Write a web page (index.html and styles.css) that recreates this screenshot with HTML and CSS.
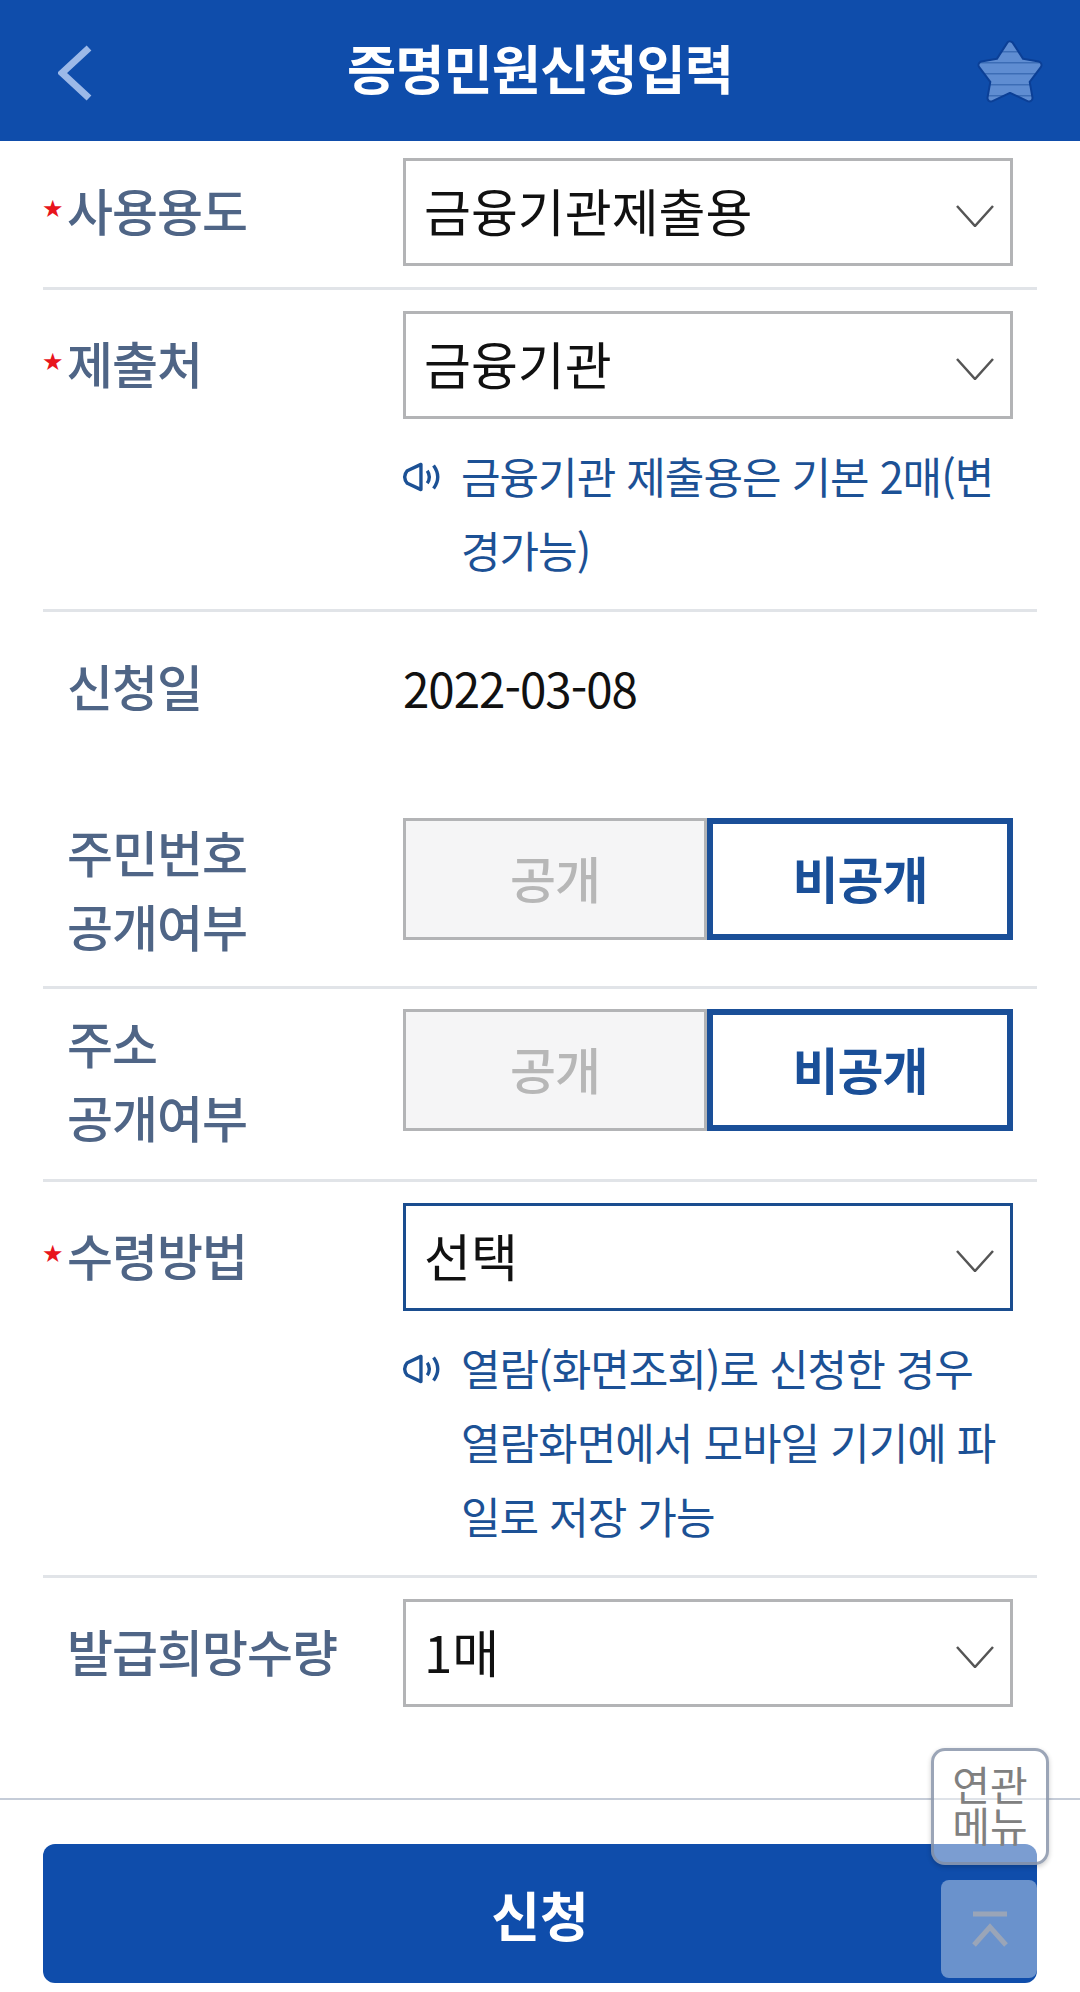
FILE: index.html
```html
<!DOCTYPE html>
<html lang="ko">
  <head>
    <meta charset="utf-8">
    <title>증명민원신청입력</title>
    <link rel="stylesheet" href="styles.css">
  </head>
  <body>
    <div class="page">
      <header class="top">
        <svg class="back" viewBox="0 0 34 56"><path d="M31 3 L4 28 L31 53" /></svg>
        <h1>증명민원신청입력</h1>
        <svg class="star" viewBox="0 0 66 64">
          <defs>
            <pattern id="stripes" width="66" height="11" patternUnits="userSpaceOnUse">
              <rect width="66" height="11" fill="#5f8dd2" />
              <rect width="66" height="1.5" fill="#3c6db6" />
            </pattern>
          </defs>
          <path d="M33 5 L44 22 L61 25 L49 41 L52 58 L33 49 L14 58 L17 41 L5 25 L22 22 Z" fill="#0b3f96" stroke="#0b3f96" stroke-width="9" stroke-linejoin="round" />
          <path d="M33 5 L44 22 L61 25 L49 41 L52 58 L33 49 L14 58 L17 41 L5 25 L22 22 Z" fill="url(#stripes)" stroke="url(#stripes)" stroke-width="5" stroke-linejoin="round" />
        </svg>
      </header>

      <form class="form">
        <div class="row row-a">
          <div class="label req">사용용도</div>
          <div class="field">
            <div class="sel">금융기관제출용
              <svg class="arrow" viewBox="0 0 38 22"><path d="M1 1 L19 21 L37 1" /></svg>
            </div>
          </div>
        </div>

        <div class="row row-b">
          <div class="label req">제출처</div>
          <div class="field">
            <div class="sel">금융기관
              <svg class="arrow" viewBox="0 0 38 22"><path d="M1 1 L19 21 L37 1" /></svg>
            </div>
            <div class="note">
              <svg class="spk" viewBox="0 0 40 28">
                <path d="M19 2 L19 26 L6 20 Q1 14 6 8 Z" />
                <path d="M25 8 Q29 14 25 20" />
                <path d="M31 3 Q39 14 31 25" />
              </svg>
              <p>금융기관 제출용은 기본 2매(변경가능)</p>
            </div>
          </div>
        </div>

        <div class="row row-date">
          <div class="label">신청일</div>
          <div class="field date">2022-03-08</div>
        </div>

        <div class="row row-c">
          <div class="label two">주민번호<br>공개여부</div>
          <div class="field">
            <div class="toggle">
              <div class="opt">공개</div>
              <div class="opt on">비공개</div>
            </div>
          </div>
        </div>

        <div class="row row-d">
          <div class="label two">주소<br>공개여부</div>
          <div class="field">
            <div class="toggle">
              <div class="opt">공개</div>
              <div class="opt on">비공개</div>
            </div>
          </div>
        </div>

        <div class="row row-b">
          <div class="label req">수령방법</div>
          <div class="field">
            <div class="sel active">선택
              <svg class="arrow" viewBox="0 0 38 22"><path d="M1 1 L19 21 L37 1" /></svg>
            </div>
            <div class="note">
              <svg class="spk" viewBox="0 0 40 28">
                <path d="M19 2 L19 26 L6 20 Q1 14 6 8 Z" />
                <path d="M25 8 Q29 14 25 20" />
                <path d="M31 3 Q39 14 31 25" />
              </svg>
              <p>열람(화면조회)로 신청한 경우 열람화면에서 모바일 기기에 파일로 저장 가능</p>
            </div>
          </div>
        </div>

        <div class="row row-last">
          <div class="label">발급희망수량</div>
          <div class="field">
            <div class="sel">1매
              <svg class="arrow" viewBox="0 0 38 22"><path d="M1 1 L19 21 L37 1" /></svg>
            </div>
          </div>
        </div>
      </form>

      <div class="bottom">
        <button class="apply" type="button">신청</button>
      </div>

      <div class="rel-menu">연관<br>메뉴</div>
      <div class="to-top">
        <svg viewBox="0 0 36 36"><path d="M1 3 H35" /><path d="M2 34 L18 16 L34 34" /></svg>
      </div>
    </div>
  </body>
</html>
```

FILE: styles.css
```css
* {
  box-sizing: border-box;
}

body {
  margin: 0;
  background: #fff;
  font-family: "Noto Sans CJK KR", "Noto Sans", sans-serif;
}

.page {
  position: relative;
  width: 1080px;
  height: 1992px;
  overflow: hidden;
}

.top {
  position: relative;
  height: 141px;
  background: #0f4dab;
  display: flex;
  align-items: center;
  justify-content: center;
}

.top h1 {
  margin: 0 0 8px;
  font-size: 53.5px;
  line-height: 60px;
  font-weight: 700;
  letter-spacing: -1px;
  color: #fff;
}

.back {
  position: absolute;
  left: 58px;
  top: 45px;
  width: 34px;
  height: 56px;
  fill: none;
  stroke: #9cb9e8;
  stroke-width: 7;
}

.star {
  position: absolute;
  left: 977px;
  top: 40px;
  width: 66px;
  height: 64px;
}

.form {
  padding: 0 43px;
}

.row {
  display: grid;
  grid-template-columns: 360px 610px;
  border-bottom: 3px solid #e1e4e8;
}

.row-a {
  padding-top: 17px;
  height: 149px;
}

.row-b {
  padding-top: 21px;
}

.row-date {
  height: 206px;
  padding-top: 36px;
  border-bottom: 0;
}

.row-c {
  height: 171px;
}

.row-d {
  height: 193px;
  padding-top: 20px;
}

.row-last {
  height: 220px;
  padding-top: 21px;
  border-bottom: 0;
}

.label {
  padding-left: 24px;
  font-size: 50px;
  line-height: 74px;
  font-weight: 500;
  letter-spacing: -1px;
  color: #4f6586;
  position: relative;
}

.row-a .label,
.row-b .label,
.row-last .label {
  padding-top: 14px;
}

.two {
  margin-top: -4px;
}

.req::before {
  content: "★";
  position: absolute;
  left: -1px;
  top: 39px;
  font-family: "DejaVu Sans", sans-serif;
  font-size: 24px;
  line-height: 24px;
  letter-spacing: 0;
  color: #e8141c;
}

.sel {
  position: relative;
  height: 108px;
  border: 3px solid #b3b4b6;
  padding-left: 18px;
  font-size: 51px;
  line-height: 98px;
  color: #111;
}

.sel.active {
  border-color: #1a4d8f;
}

.arrow {
  position: absolute;
  right: 16px;
  top: 44px;
  width: 38px;
  height: 22px;
  fill: none;
  stroke: #555;
  stroke-width: 2.5;
}

.note {
  display: flex;
  padding: 19px 0 23px;
}

.spk {
  flex: none;
  width: 42px;
  height: 30px;
  margin: 24px 18px 0 -2px;
  fill: none;
  stroke: #1c5195;
  stroke-width: 3.2;
  stroke-linejoin: round;
}

.note p {
  margin: 0;
  font-size: 43px;
  line-height: 74px;
  letter-spacing: -1px;
  color: #1c5195;
}

.date {
  font-size: 47.5px;
  line-height: 74px;
  letter-spacing: -1px;
  color: #111;
  padding-top: 3px;
}

.toggle {
  display: grid;
  grid-template-columns: 304px 306px;
  height: 122px;
}

.opt {
  display: flex;
  align-items: center;
  justify-content: center;
  padding-bottom: 4px;
  background: #f5f5f6;
  border: 3px solid #b3b4b6;
  font-size: 50px;
  font-weight: 500;
  letter-spacing: -1px;
  color: #b7b7b7;
}

.opt.on {
  background: #fff;
  border: 6px solid #1a4f98;
  font-weight: 700;
  color: #1a4f98;
}

.bottom {
  border-top: 2px solid #c5ccd8;
  padding: 44px 43px 0;
}

.apply {
  display: block;
  width: 100%;
  height: 139px;
  border: 0;
  border-radius: 12px;
  background: #0f4dab;
  color: #fff;
  font-family: inherit;
  font-size: 53px;
  font-weight: 700;
}

.rel-menu {
  position: absolute;
  left: 931px;
  top: 1748px;
  width: 118px;
  height: 117px;
  padding-top: 12px;
  border: 3px solid rgba(130, 142, 165, 0.8);
  border-radius: 14px;
  background: rgba(255, 255, 255, 0.45);
  box-shadow: 0 2px 5px rgba(0, 0, 0, 0.2);
  font-size: 41px;
  line-height: 41px;
  text-align: center;
  color: #808080;
}

.to-top {
  position: absolute;
  left: 941px;
  top: 1880px;
  width: 96px;
  height: 98px;
  border-radius: 8px;
  background: #6a92cc;
  display: flex;
  align-items: center;
  justify-content: center;
}

.to-top svg {
  width: 36px;
  height: 36px;
  margin-left: 2px;
  fill: none;
  stroke: #9aa5b8;
  stroke-width: 5;
}
```
